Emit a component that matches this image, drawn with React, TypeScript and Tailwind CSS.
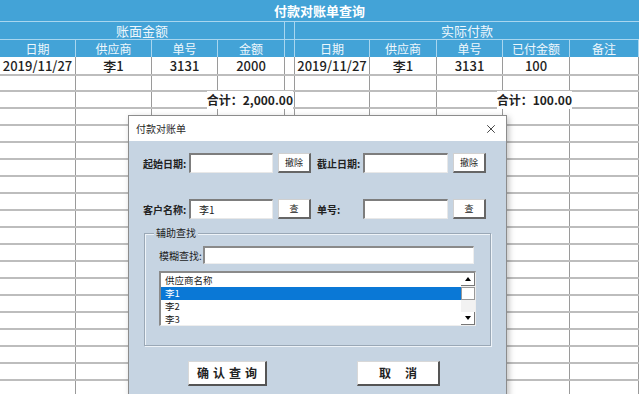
import { X } from "lucide-react";

const W = ["w-[76px]", "w-[76px]", "w-[66px]", "w-[67px]", "w-[10px]", "w-[75px]", "w-[67px]", "w-[66px]", "w-[67px]", "w-[69px]"];

const dataRow = ["2019/11/27", "李1", "3131", "2000", "", "2019/11/27", "李1", "3131", "100", ""];
const heads = ["日期", "供应商", "单号", "金额", "", "日期", "供应商", "单号", "已付金额", "备注"];

function Cell({ i, children, className = "" }: { i: number; children?: React.ReactNode; className?: string }) {
  return (
    <div className={`${W[i]} shrink-0 flex items-center justify-center border-r border-[#9a9a9a] ${className}`}>
      {children}
    </div>
  );
}

function BodyRow({ h = "h-[17px]", values }: { h?: string; values?: string[] }) {
  return (
    <div className={`flex ${h} border-b-2 border-[#bdbdbd]`}>
      {W.map((_, i) => (
        <Cell key={i} i={i}>
          {values?.[i]}
        </Cell>
      ))}
    </div>
  );
}

function SunkenInput({ w, children }: { w: string; children?: React.ReactNode }) {
  return (
    <div className={`${w} h-[20px] shrink-0 bg-white border-t-2 border-l-2 border-[#7d7d7d] border-b border-r border-b-[#e8e8e8] border-r-[#e8e8e8] text-[11px] pl-2 flex items-center`}>
      {children}
    </div>
  );
}

function SmallBtn({ label }: { label: string }) {
  return (
    <div className="w-[33px] h-[20px] bg-white border border-[#d0d0d0] border-r-2 border-b-2 border-r-[#666] border-b-[#666] text-[9px] font-normal flex items-center justify-center">
      {label}
    </div>
  );
}

function Label({ w, children }: { w: string; children: React.ReactNode }) {
  return <span className={`${w} shrink-0 whitespace-nowrap text-[10px] font-semibold`}>{children}</span>;
}

export default function App() {
  return (
    <div className="relative w-[639px] h-[394px] overflow-hidden bg-white font-['Noto_Sans_CJK_SC',sans-serif] text-[#1f1f1f]">
      {/* title */}
      <div className="h-[22px] bg-[#43a3d7] flex items-center justify-center text-white font-bold text-[13px] border-b border-[#a9d6ef]">
        付款对账单查询
      </div>
      {/* group header */}
      <div className="flex h-[18px] bg-[#43a3d7] text-[#eef7fc] text-[13px] border-b border-[#a9d6ef]">
        <div className="w-[285px] flex items-center justify-center border-r border-[#a9d6ef]">账面金额</div>
        <div className="w-[10px] border-r border-[#a9d6ef]" />
        <div className="flex-1 flex items-center justify-center">实际付款</div>
      </div>
      {/* column header */}
      <div className="flex h-[17px] bg-[#43a3d7] text-[#eef7fc] text-[12px]">
        {heads.map((t, i) => (
          <div key={i} className={`${W[i]} shrink-0 flex items-center justify-center border-r border-[#a9d6ef]`}>
            {t}
          </div>
        ))}
      </div>
      <div className="text-[13px] font-medium">
        <BodyRow h="h-[19px]" values={dataRow} />
        <BodyRow h="h-[16px]" />
        <div className="flex h-[17px] border-b-2 border-[#bdbdbd] font-bold text-[12px]">
          <Cell i={0} />
          <Cell i={1} />
          <div className="w-[133px] shrink-0 flex items-center justify-end border-r border-[#9a9a9a]">
            <span className="relative -mr-[9px] whitespace-nowrap bg-white">合计：2,000.00</span>
          </div>
          <Cell i={4} />
          <Cell i={5} />
          <Cell i={6} />
          <div className="w-[133px] shrink-0 flex items-center justify-end border-r border-[#9a9a9a]">
            <span className="relative -mr-[3px] whitespace-nowrap bg-white">合计：100.00</span>
          </div>
          <Cell i={9} />
        </div>
        {Array.from({ length: 17 }).map((_, r) => (
          <BodyRow key={r} />
        ))}
      </div>

      {/* dialog */}
      <div className="absolute left-[128px] top-[115px] w-[379px] h-[290px] border border-[#8c8c8c] shadow-[2px_2px_6px_rgba(0,0,0,0.25)] bg-[#c6d4e2] flex flex-col">
        <div className="h-[25px] bg-white flex items-center justify-between pl-[7px] pr-[8px] text-[10px]">
          <span>付款对账单</span>
          <X size={14} strokeWidth={1.4} />
        </div>
        <div className="flex flex-col pt-[12px] text-[#222]">
          <div className="flex items-center h-[20px]">
            <div className="ml-[14px]" />
            <Label w="w-[46px]">起始日期:</Label>
            <SunkenInput w="w-[84px]" />
            <div className="ml-[5px]"><SmallBtn label="撤除" /></div>
            <div className="ml-[6px]" />
            <Label w="w-[46px]">截止日期:</Label>
            <SunkenInput w="w-[85px]" />
            <div className="ml-[5px]"><SmallBtn label="撤除" /></div>
          </div>
          <div className="flex items-center h-[20px] mt-[26px]">
            <div className="ml-[14px]" />
            <Label w="w-[46px]">客户名称:</Label>
            <SunkenInput w="w-[84px]">
              <span className="text-[10px]">李1</span>
            </SunkenInput>
            <div className="ml-[5px]"><SmallBtn label="查" /></div>
            <div className="ml-[6px]" />
            <Label w="w-[46px]">单号:</Label>
            <SunkenInput w="w-[85px]" />
            <div className="ml-[5px]"><SmallBtn label="查" /></div>
          </div>
          {/* group box */}
          <div className="relative ml-[15px] mt-[14px] w-[347px] h-[113px] border border-[#9aa8b6] shadow-[inset_1px_1px_0_#eef3f8,1px_1px_0_#eef3f8] pt-[12px] pl-[14px]">
            <span className="absolute -top-[8px] left-[9px] px-[2px] bg-[#c6d4e2] text-[10px] leading-[14px]">辅助查找</span>
            <div className="flex items-center h-[18px]">
              <span className="w-[44px] shrink-0 whitespace-nowrap text-[10px]">模糊查找:</span>
              <div className="w-[271px] h-[18px] bg-white border-t-2 border-l-2 border-[#8a8a8a] border-b border-r border-b-[#eee] border-r-[#eee]" />
            </div>
            <div className="mt-[7px] w-[317px] h-[55px] bg-white border-t-2 border-l-2 border-[#8a8a8a] border-b border-r border-b-[#eee] border-r-[#eee] flex text-[9.5px]">
              <div className="flex-1 flex flex-col pt-[1px]">
                <div className="h-[13px] leading-[13px] pl-[4px]">供应商名称</div>
                <div className="h-[13px] leading-[13px] pl-[4px] bg-[#0a78d6] text-white">李1</div>
                <div className="h-[13px] leading-[13px] pl-[4px]">李2</div>
                <div className="h-[13px] leading-[13px] pl-[4px]">李3</div>
              </div>
              <div className="w-[14px] bg-[#f2f2f2] flex flex-col items-center">
                <div className="h-[13px] w-full flex items-center justify-center bg-white border-r border-b border-[#777]">
                  <span className="w-0 h-0 border-l-[3px] border-r-[3px] border-b-[4px] border-l-transparent border-r-transparent border-b-black" />
                </div>
                <div className="h-[13px] w-full bg-white border border-[#999] mt-[1px]" />
                <div className="flex-1" />
                <div className="h-[13px] w-full flex items-center justify-center bg-white border-r border-b border-[#777]">
                  <span className="w-0 h-0 border-l-[3px] border-r-[3px] border-t-[4px] border-l-transparent border-r-transparent border-t-black" />
                </div>
              </div>
            </div>
          </div>
          {/* action buttons */}
          <div className="flex mt-[15px]">
            <div className="ml-[59px] w-[79px] h-[25px] bg-white border border-[#d8d8d8] border-r-2 border-b-2 border-r-[#555] border-b-[#555] flex items-center justify-center text-[12px] font-bold tracking-[4px] pl-[4px]">
              确认查询
            </div>
            <div className="ml-[90px] w-[83px] h-[25px] bg-white border border-[#d8d8d8] border-r-2 border-b-2 border-r-[#555] border-b-[#555] flex items-center justify-center text-[12px] font-bold tracking-[14px] pl-[14px]">
              取消
            </div>
          </div>
        </div>
      </div>
    </div>
  );
}
